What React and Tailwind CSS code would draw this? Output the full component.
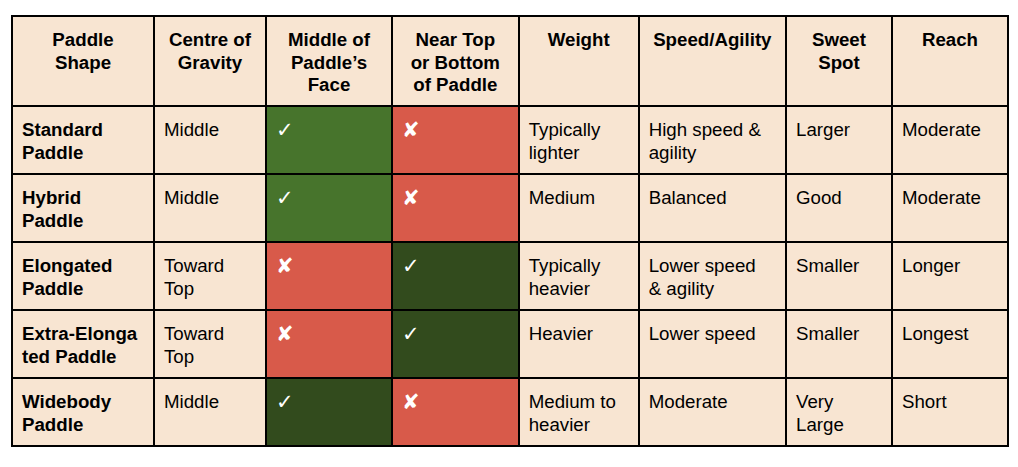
import React from "react";

const Y = "✓";
const N = "✘";

const rows = [
  ["Standard Paddle", "Middle", [Y, "lg"], [N, "r"], "Typically lighter", "High speed & agility", "Larger", "Moderate"],
  ["Hybrid Paddle", "Middle", [Y, "lg"], [N, "r"], "Medium", "Balanced", "Good", "Moderate"],
  ["Elongated Paddle", "Toward Top", [N, "r"], [Y, "dg"], "Typically heavier", "Lower speed & agility", "Smaller", "Longer"],
  ["Extra-Elonga ted Paddle", "Toward Top", [N, "r"], [Y, "dg"], "Heavier", "Lower speed", "Smaller", "Longest"],
  ["Widebody Paddle", "Middle", [Y, "dg"], [N, "r"], "Medium to heavier", "Moderate", "Very Large", "Short"],
];

const headers = [
  "Paddle Shape",
  "Centre of Gravity",
  "Middle of Paddle’s Face",
  "Near Top or Bottom of Paddle",
  "Weight",
  "Speed/Agility",
  "Sweet Spot",
  "Reach",
];

const bg = {
  lg: "bg-[#47742c]",
  dg: "bg-[#324b1d]",
  r: "bg-[#d85a4a]",
};

export default function App() {
  return (
    <div className="w-[1018px] h-[467px] bg-white pt-[15px] pl-[11px]" style={{ fontFamily: '"Liberation Sans", Arial, sans-serif' }}>
      <div className="grid w-[998px] grid-cols-[140px_110px_124px_124.7px_118px_145.3px_104px_114px] grid-rows-[88px_66px_66px_66px_66px_66px] gap-[2px] bg-black p-[2px] text-[18.7px] leading-[22.5px] text-black">
        {headers.map((h, i) => (
          <div key={i} className="bg-[#f8e5d2] px-[12px] pt-[12px] text-center font-bold">
            {h}
          </div>
        ))}
        {rows.map((r, ri) =>
          r.map((c, ci) => {
            if (Array.isArray(c)) {
              return (
                <div key={ri + "-" + ci} className={`${bg[c[1]]} pl-[9px] pt-[12px] text-white`}>
                  <div className="h-[22.5px] text-[21px] leading-[22.5px] font-bold" style={{ fontFamily: '"DejaVu Sans", sans-serif' }}>{c[0]}</div>
                </div>
              );
            }
            return (
              <div key={ri + "-" + ci} className={`bg-[#f8e5d2] pl-[9px] pr-[14px] pt-[12px] ${ci === 0 ? "font-bold" : ""}`}>
                {c}
              </div>
            );
          })
        )}
      </div>
    </div>
  );
}
